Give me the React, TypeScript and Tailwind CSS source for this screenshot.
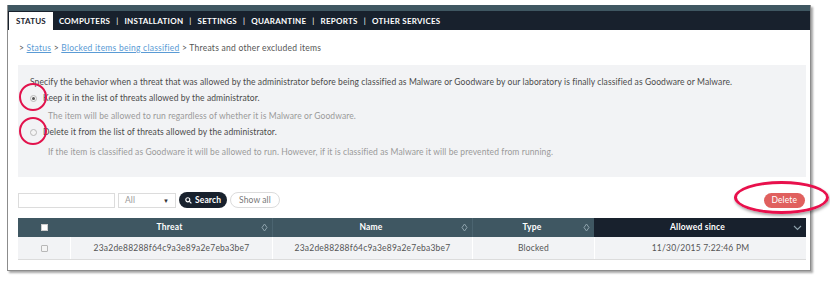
import React from "react";

const font = { fontFamily: "Lato, 'Liberation Sans', sans-serif" };

const navItems = ["COMPUTERS", "INSTALLATION", "SETTINGS", "QUARANTINE", "REPORTS", "OTHER SERVICES"];

const SortIcon: React.FC = () => (
  <svg width="7" height="9" viewBox="0 0 7 9" className="shrink-0">
    <path d="M3.5 1 L6 4.5 L3.5 8 L1 4.5 Z" fill="none" stroke="#8fa3ad" strokeWidth="1" />
  </svg>
);

const Radio: React.FC<{ checked?: boolean }> = ({ checked }) => (
  <span className="relative flex items-center justify-center w-[22px]">
    <span className="w-[7px] h-[7px] rounded-full border border-[#b8b8b8] bg-[#f4f4f4] flex items-center justify-center">
      {checked && <span className="w-[3px] h-[3px] rounded-full bg-[#555]" />}
    </span>
    <span className="absolute left-[-3px] top-[-12px] w-[28px] h-[28px] rounded-full border-2 border-[#e2124c]" />
  </span>
);

export default function App() {
  return (
    <div className="w-[830px] h-[297px] bg-white pt-[5px] pl-[7px]" style={font}>
      <div className="w-[804px] h-[266px] border border-[#8c8c8c] border-t-0 shadow-[2px_2px_2px_rgba(0,0,0,0.35)] bg-white">
        <div className="h-[6px] bg-[#3f5762]" />
        <div className="h-[19px] bg-[#18212d] flex items-end">
          <div className="h-[18px] ml-[1px] px-[7px] bg-white text-[#18212d] text-[8px] font-bold tracking-[0.2px] flex items-center">STATUS</div>
          <div className="flex items-center h-[18px] pl-[6px] text-white text-[8px] font-bold tracking-[0.25px]">
            {navItems.map((n, i) => (
              <span key={n} className="flex items-center">
                {i > 0 && <span className="mx-[6px] font-normal">|</span>}
                {n}
              </span>
            ))}
          </div>
        </div>

        <div className="pl-[10px] pr-[4px] tracking-[0.1px]">
          <div className="mt-[12px] h-[12px] flex items-center text-[8.5px] text-[#555] pl-[1px] tracking-[0.25px]">
            <span>&gt;&nbsp;</span>
            <span className="text-[#5a9bd5] underline">Status</span>
            <span>&nbsp;&gt;&nbsp;</span>
            <span className="text-[#5a9bd5] underline">Blocked items being classified</span>
            <span>&nbsp;&gt; Threats and other excluded items</span>
          </div>

          <div className="mt-[11px] h-[112px] bg-[#f2f3f5] pt-[11px] pl-[12px] text-[8.5px]">
            <div className="h-[12px] flex items-center text-[#4a4a4a] whitespace-nowrap">
              Specify the behavior when a threat that was allowed by the administrator before being classified as Malware or Goodware by our laboratory is finally classified as Goodware or Malware.
            </div>
            <div className="mt-[4px] h-[12px] flex items-center text-[#4a4a4a] -ml-[8px]">
              <Radio checked />
              <span className="ml-[-1px]">Keep it in the list of threats allowed by the administrator.</span>
            </div>
            <div className="mt-[6px] h-[12px] flex items-center text-[#9a9a9a] pl-[18px]">
              The item will be allowed to run regardless of whether it is Malware or Goodware.
            </div>
            <div className="mt-[4px] h-[12px] flex items-center text-[#4a4a4a] -ml-[8px]">
              <Radio />
              <span className="ml-[-1px]">Delete it from the list of threats allowed by the administrator.</span>
            </div>
            <div className="mt-[8px] h-[12px] flex items-center text-[#9a9a9a] pl-[18px]">
              If the item is classified as Goodware it will be allowed to run. However, if it is classified as Malware it will be prevented from running.
            </div>
          </div>

          <div className="mt-[15px] h-[16px] flex items-center text-[8.5px]">
            <div className="w-[97px] h-[15px] border border-[#dcdcdc] bg-white" />
            <div className="ml-[3px] w-[58px] h-[15px] border border-[#dcdcdc] bg-white flex items-center justify-between px-[6px] text-[#9a9a9a]">
              <span>All</span>
              <span className="text-[#333] text-[6px]">▼</span>
            </div>
            <div className="ml-[3px] h-[16px] px-[6px] rounded-full bg-[#18212d] text-white font-bold flex items-center gap-[3px]">
              <svg width="7" height="7" viewBox="0 0 8 8">
                <circle cx="3.2" cy="3.2" r="2.3" fill="none" stroke="#fff" strokeWidth="1.3" />
                <path d="M5 5 L7.3 7.3" stroke="#fff" strokeWidth="1.5" />
              </svg>
              Search
            </div>
            <div className="ml-[3px] h-[16px] px-[8px] rounded-full border border-[#dcdcdc] text-[#777] flex items-center">Show all</div>
            <div className="ml-auto mr-[1px] relative">
              <div className="h-[15px] px-[8px] rounded-full bg-[#e0605e] text-white flex items-center">Delete</div>
              <div className="absolute left-[-30px] top-[-12px] w-[95px] h-[33px] rounded-[50%] border-[3px] border-[#e8104c] shadow-[1px_2px_3px_rgba(0,0,0,0.35)]" />
            </div>
          </div>

          <div className="mt-[10px] text-[8.5px] tracking-[0.2px]">
            <div className="h-[19px] flex text-white font-bold">
              <div className="w-[52px] bg-[#3f5762] flex items-center justify-center">
                <span className="w-[7px] h-[7px] bg-white border border-[#ccc]" />
              </div>
              <div className="w-[202px] bg-[#3f5762] flex items-center pl-[8px] pr-[4px]">
                <span className="flex-1 text-center">Threat</span>
                <SortIcon />
              </div>
              <div className="w-[200px] bg-[#3f5762] flex items-center pl-[8px] pr-[4px] border-l border-[#4b6470]">
                <span className="flex-1 text-center">Name</span>
                <SortIcon />
              </div>
              <div className="w-[122px] bg-[#3f5762] flex items-center pl-[8px] pr-[4px] border-l border-[#4b6470]">
                <span className="flex-1 text-center">Type</span>
                <SortIcon />
              </div>
              <div className="flex-1 bg-[#18212d] flex items-center pl-[8px] pr-[4px]">
                <span className="flex-1 text-center">Allowed since</span>
                <svg width="9" height="6" viewBox="0 0 9 6">
                  <path d="M1 1 L4.5 4.5 L8 1" fill="none" stroke="#8fa3ad" strokeWidth="1.1" />
                </svg>
              </div>
            </div>
            <div className="h-[23px] flex text-[#555] bg-[#f2f3f5] border-b border-[#dcdcdc]">
              <div className="w-[52px] flex items-center justify-center">
                <span className="w-[7px] h-[7px] rounded-[1px] bg-[#f4f4f4] border border-[#b8b8b8]" />
              </div>
              <div className="w-[202px] flex items-center justify-center border-l border-white">23a2de88288f64c9a3e89a2e7eba3be7</div>
              <div className="w-[200px] flex items-center justify-center border-l border-white">23a2de88288f64c9a3e89a2e7eba3be7</div>
              <div className="w-[122px] flex items-center justify-center border-l border-white">Blocked</div>
              <div className="flex-1 flex items-center justify-center border-l border-white">11/30/2015 7:22:46 PM</div>
            </div>
          </div>
        </div>
      </div>
    </div>
  );
}
